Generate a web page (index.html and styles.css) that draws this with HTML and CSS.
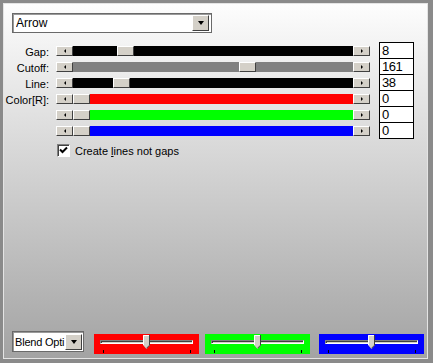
FILE: index.html
```html
<!DOCTYPE html>
<html lang="en">
<head>
  <meta charset="UTF-8" />
  <title>Arrow</title>
  <link rel="stylesheet" href="styles.css">
</head>
<body>
  <div class="panel">
    <div class="combo top-combo">
      <span class="combo-text">Arrow</span>
      <span class="combo-btn"><i class="down"></i></span>
    </div>

    <div class="rows">
      <div class="row">
        <span class="label">Gap:</span>
        <div class="slider">
          <span class="sbtn"><i class="left"></i></span>
          <div class="track black"><span class="thumb" style="left:44px"></span></div>
          <span class="sbtn"><i class="right"></i></span>
        </div>
        <div class="val">8</div>
      </div>
      <div class="row">
        <span class="label">Cutoff:</span>
        <div class="slider">
          <span class="sbtn"><i class="left"></i></span>
          <div class="track grey"><span class="thumb" style="left:166px"></span></div>
          <span class="sbtn"><i class="right"></i></span>
        </div>
        <div class="val">161</div>
      </div>
      <div class="row">
        <span class="label">Line:</span>
        <div class="slider">
          <span class="sbtn"><i class="left"></i></span>
          <div class="track black"><span class="thumb" style="left:40px"></span></div>
          <span class="sbtn"><i class="right"></i></span>
        </div>
        <div class="val">38</div>
      </div>
      <div class="row">
        <span class="label">Color[R]:</span>
        <div class="slider">
          <span class="sbtn"><i class="left"></i></span>
          <div class="track red"><span class="thumb" style="left:0px"></span></div>
          <span class="sbtn"><i class="right"></i></span>
        </div>
        <div class="val">0</div>
      </div>
      <div class="row">
        <span class="label"></span>
        <div class="slider">
          <span class="sbtn"><i class="left"></i></span>
          <div class="track green"><span class="thumb" style="left:0px"></span></div>
          <span class="sbtn"><i class="right"></i></span>
        </div>
        <div class="val">0</div>
      </div>
      <div class="row">
        <span class="label"></span>
        <div class="slider">
          <span class="sbtn"><i class="left"></i></span>
          <div class="track blue"><span class="thumb" style="left:0px"></span></div>
          <span class="sbtn"><i class="right"></i></span>
        </div>
        <div class="val">0</div>
      </div>
    </div>

    <div class="check">
      <span class="cbox">
        <svg width="9" height="9" viewBox="0 0 9 9"><path d="M1 3.5 L3.5 6 L8 1.5" fill="none" stroke="#000" stroke-width="2"/></svg>
      </span>
      <span>Create <u>l</u>ines not gaps</span>
    </div>

    <div class="bottom">
      <div class="combo small-combo">
        <span class="combo-text">Blend Opti</span>
        <span class="combo-btn"><i class="down"></i></span>
      </div>
      <div class="tbar red" style="margin-left:10px">
        <span class="channel"></span>
        <svg class="tthumb" width="7" height="14" viewBox="0 0 7 14"><path d="M0 0 H7 V10 L3.5 14 L0 10 Z" fill="#d4d0c8"/><path d="M0.5 10 V0.5 H6" fill="none" stroke="#fff"/><path d="M6.5 0 V10.2 L3.5 13.3" fill="none" stroke="#404040"/></svg>
        <span class="tick t1"></span><span class="tick t2"></span>
      </div>
      <div class="tbar green" style="margin-left:6px">
        <span class="channel"></span>
        <svg class="tthumb" width="7" height="14" viewBox="0 0 7 14"><path d="M0 0 H7 V10 L3.5 14 L0 10 Z" fill="#d4d0c8"/><path d="M0.5 10 V0.5 H6" fill="none" stroke="#fff"/><path d="M6.5 0 V10.2 L3.5 13.3" fill="none" stroke="#404040"/></svg>
        <span class="tick t1"></span><span class="tick t2"></span>
      </div>
      <div class="tbar blue" style="margin-left:9px">
        <span class="channel"></span>
        <svg class="tthumb" width="7" height="14" viewBox="0 0 7 14"><path d="M0 0 H7 V10 L3.5 14 L0 10 Z" fill="#d4d0c8"/><path d="M0.5 10 V0.5 H6" fill="none" stroke="#fff"/><path d="M6.5 0 V10.2 L3.5 13.3" fill="none" stroke="#404040"/></svg>
        <span class="tick t1"></span><span class="tick t2"></span>
      </div>
    </div>
  </div>
</body>
</html>
```

FILE: styles.css
```css
body { margin: 0; width: 433px; height: 363px; background: #8a8a8a; font-family: "Liberation Sans", Arial, sans-serif; font-size: 11px; color: #000; overflow: hidden; }
.panel { margin: 3px 0 0 3px; width: 425px; height: 356px; box-sizing: border-box; border: 1px solid #e4e4e4; background: linear-gradient(#fdfdfd, #a3a3a3); display: flex; flex-direction: column; }

.combo { display: flex; align-items: center; background: #fff; border: 1px solid #6a6a6a; box-shadow: inset 1px 1px #9a9a9a; box-sizing: border-box; padding: 0 2px 0 3px; }
.combo-text { flex: 1; font-size: 12px; overflow: hidden; white-space: nowrap; }
.combo-btn { width: 17px; height: 16px; box-sizing: border-box; background: #d4d0c8; border: 1px solid; border-color: #fff #404040 #404040 #fff; display: flex; align-items: center; justify-content: center; }
.down { width: 0; height: 0; border-left: 3.5px solid transparent; border-right: 3.5px solid transparent; border-top: 4px solid #000; }
.top-combo { margin: 9px 0 0 8px; width: 200px; height: 20px; }
.small-combo { width: 72px; height: 21px; padding: 0 1px 0 2px; }
.small-combo .combo-text { font-size: 11px; letter-spacing: -0.2px; }

.rows { margin-top: 9px; }
.row { display: flex; height: 16px; align-items: flex-start; }
.label { width: 45px; text-align: right; line-height: 14px; margin-top: 3px; white-space: nowrap; }
.slider { display: flex; margin: 4px 0 0 7px; height: 10px; }
.sbtn { width: 17px; height: 10px; box-sizing: border-box; background: #d4d0c8; border: 1px solid; border-color: #fff #404040 #404040 #fff; display: flex; align-items: center; justify-content: center; }
.left { width: 0; height: 0; border-top: 2px solid transparent; border-bottom: 2px solid transparent; border-right: 2px solid #000; }
.right { width: 0; height: 0; border-top: 2px solid transparent; border-bottom: 2px solid transparent; border-left: 2px solid #000; }
.track { width: 280px; height: 10px; position: relative; }
.thumb { position: absolute; top: 0; width: 17px; height: 10px; box-sizing: border-box; background: #d4d0c8; border: 1px solid; border-color: #fff #404040 #404040 #fff; }
.black { background: #000; }
.grey { background: #808080; }
.red { background: #ff0000; }
.green { background: #00ff00; }
.blue { background: #0000ff; }
.val { margin-left: 9px; width: 35px; height: 17px; box-sizing: border-box; border: 1px solid #000; background: #fff; font-size: 13px; letter-spacing: -0.5px; line-height: 15px; padding-left: 2px; }

.check { display: flex; align-items: center; margin: 6px 0 0 53px; font-size: 11px; }
.cbox { width: 13px; height: 13px; box-sizing: border-box; background: #fff; border: 1px solid; border-color: #808080 #fff #fff #808080; box-shadow: inset 1px 1px #404040; display: flex; align-items: center; justify-content: center; margin-right: 5px; }

.bottom { margin-top: auto; display: flex; align-items: flex-start; padding: 0 0 4px 8px; }
.tbar { width: 105px; height: 20px; margin-top: 3px; position: relative; }
.channel { position: absolute; left: 6px; top: 6px; width: 93px; height: 4px; box-sizing: border-box; background: #d4d0c8; border: 1px solid; border-color: #808080 #fff #fff #808080; box-shadow: inset 1px 1px #404040; }
.tthumb { position: absolute; left: 49px; top: 1px; }
.tick { position: absolute; top: 16px; width: 1px; height: 3px; background: #000; }
.t1 { left: 9px; }
.t2 { left: 96px; }
```
